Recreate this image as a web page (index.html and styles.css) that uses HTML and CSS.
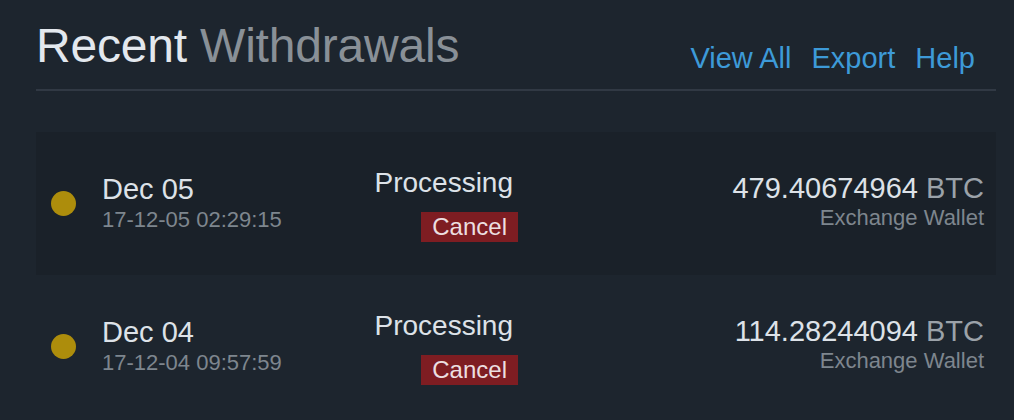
FILE: index.html
```html
<!DOCTYPE html>
<html lang="en">
<head>
    <meta charset="UTF-8">
    <title>Recent Withdrawals</title>
    <link rel="stylesheet" href="styles.css">
</head>
<body>
    <div class="panel">
        <div class="panel-head">
            <h1 class="title">Recent <span class="title-sub">Withdrawals</span></h1>
            <nav class="links">
                <a href="#">View All</a>
                <a href="#">Export</a>
                <a href="#">Help</a>
            </nav>
        </div>

        <div class="row row-active">
            <span class="dot"></span>
            <div class="when">
                <div class="day">Dec 05</div>
                <div class="stamp">17-12-05 02:29:15</div>
            </div>
            <div class="status">
                <div class="state">Processing</div>
                <button class="cancel">Cancel</button>
            </div>
            <div class="amount">
                <div class="value">479.40674964 <span class="unit">BTC</span></div>
                <div class="wallet">Exchange Wallet</div>
            </div>
        </div>

        <div class="row">
            <span class="dot"></span>
            <div class="when">
                <div class="day">Dec 04</div>
                <div class="stamp">17-12-04 09:57:59</div>
            </div>
            <div class="status">
                <div class="state">Processing</div>
                <button class="cancel">Cancel</button>
            </div>
            <div class="amount">
                <div class="value">114.28244094 <span class="unit">BTC</span></div>
                <div class="wallet">Exchange Wallet</div>
            </div>
        </div>
    </div>
</body>
</html>
```

FILE: styles.css
```css
body {
    margin: 0;
    background-color: #1d252e;
    font-family: "Liberation Sans", Arial, sans-serif;
    color: #dde2e8;
}
.panel {
    width: 960px;
    margin-left: 36px;
}
.panel-head {
    display: flex;
    justify-content: space-between;
    align-items: flex-end;
    padding-top: 22px;
    padding-bottom: 19px;
    border-bottom: 2px solid #313944;
}
.title {
    margin: 0;
    font-size: 48px;
    font-weight: normal;
    line-height: 48px;
    color: #e3e8ee;
    letter-spacing: -0.2px;
}
.title-sub {
    color: #899097;
}
.links {
    display: flex;
    gap: 20px;
    padding-right: 21px;
    padding-bottom: 2px;
}
.links a {
    font-size: 29px;
    line-height: 20px;
    color: #3d9ad8;
    text-decoration: none;
}
.row {
    display: flex;
    align-items: center;
    height: 143px;
    padding: 0 12px 0 15px;
}
.row-active {
    margin-top: 41px;
    background-color: #1a2129;
}
.dot {
    width: 25px;
    height: 25px;
    border-radius: 50%;
    background-color: #ad8d0c;
    flex-shrink: 0;
}
.when {
    width: 250px;
    margin-left: 26px;
}
.day {
    font-size: 29px;
    line-height: 26px;
}
.stamp {
    margin-top: 6px;
    font-size: 22px;
    line-height: 24px;
    color: #7e868e;
}
.status {
    width: 166px;
    text-align: right;
    padding-top: 3px;
}
.state {
    font-size: 28px;
    line-height: 30px;
    margin-right: 5px;
}
.cancel {
    margin-top: 14px;
    padding: 0 11px;
    border: 0;
    background-color: #7e1d22;
    color: #ecdfe0;
    font-family: inherit;
    font-size: 24px;
    line-height: 30px;
    height: 30px;
}
.amount {
    flex: 1;
    text-align: right;
    padding-bottom: 4px;
}
.value {
    font-size: 29px;
    line-height: 28px;
}
.unit {
    color: #9ba2a9;
}
.wallet {
    margin-top: 4px;
    font-size: 22px;
    line-height: 24px;
    color: #7e868e;
}
```
